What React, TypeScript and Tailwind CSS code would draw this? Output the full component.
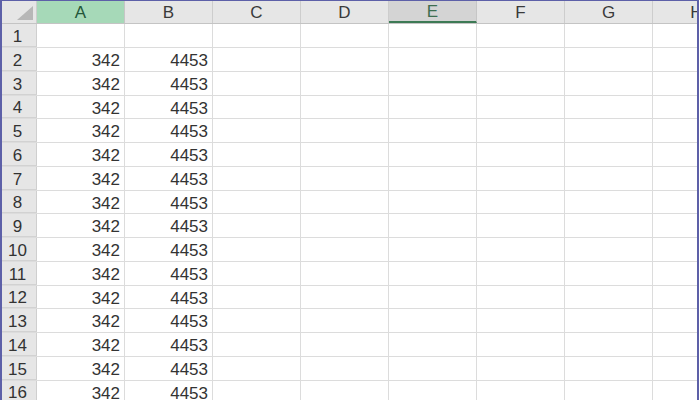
const COLS = ["A", "B", "C", "D", "E", "F", "G", "H"];
const ROWS = Array.from({ length: 17 }, (_, i) => i + 1);

function HeaderCell({ label }: { label: string }) {
  if (label === "A") {
    return (
      <div className="w-[88px] shrink-0 h-full bg-[#a6d9b8] border-r border-[#c6c6c6] flex items-center justify-center pt-[2px] text-[17px] text-[#23563a]">
        {label}
      </div>
    );
  }
  if (label === "E") {
    return (
      <div className="w-[88px] shrink-0 h-full bg-[#d4d4d4] border-r border-[#c6c6c6] border-b-2 border-b-[#3d7a55] flex items-center justify-center pt-[2px] text-[17px] text-[#3d6e50]">
        {label}
      </div>
    );
  }
  return (
    <div className="w-[88px] shrink-0 h-full bg-[#e6e6e6] border-r border-[#cdcdcd] flex items-center justify-center pt-[2px] text-[17px] text-[#3a3a3a]">
      {label}
    </div>
  );
}

export default function App() {
  return (
    <div
      className="w-[699px] h-[400px] overflow-hidden bg-white border-l-2 border-t border-r-2 border-[#5d60a8]"
      style={{ fontFamily: '"Liberation Sans", Arial, sans-serif' }}
    >
      {/* column headers */}
      <div className="flex h-[23px] border-b border-[#c4c4c4] bg-[#e6e6e6]">
        <div className="w-[35px] shrink-0 h-full border-r border-[#cdcdcd] bg-[#e6e6e6] relative">
          <svg width="16" height="14" viewBox="0 0 16 14" className="absolute right-[3px] bottom-[3px]">
            <polygon points="16,0 16,14 0,14" fill="#b7b7b7" />
          </svg>
        </div>
        {COLS.map((c) => (
          <HeaderCell key={c} label={c} />
        ))}
      </div>

      {ROWS.map((r, i) => (
        <div
          key={r}
          className={`flex border-b border-[#dcdcdc] ${i % 4 === 3 ? "h-[23px]" : "h-[24px]"}`}
        >
          <div className="w-[35px] shrink-0 h-full bg-[#e6e6e6] border-r border-[#cfcfcf] border-b border-b-[#d2d2d2] flex items-center justify-center pr-[3px] pt-[3px] text-[17px] text-[#333]">
            {r}
          </div>
          {COLS.map((c) => (
            <div
              key={c}
              className="w-[88px] shrink-0 h-full border-r border-[#dcdcdc] flex items-center justify-end pr-[4px] pt-[3px] text-[17px] text-[#333]"
            >
              {r >= 2 && c === "A" ? "342" : r >= 2 && c === "B" ? "4453" : ""}
            </div>
          ))}
        </div>
      ))}
    </div>
  );
}
